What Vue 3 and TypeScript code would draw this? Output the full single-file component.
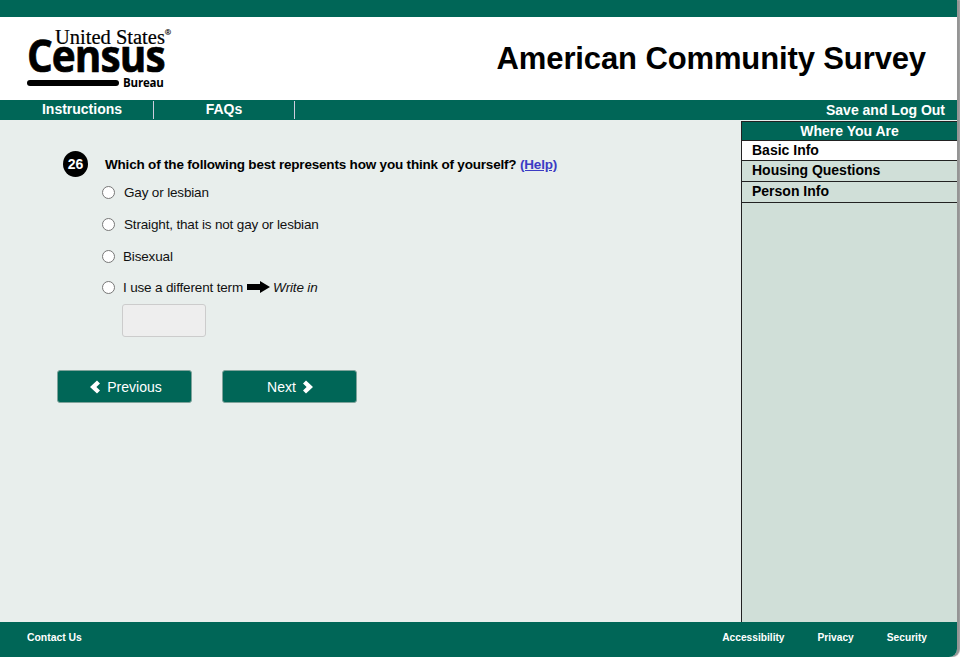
<script setup lang="ts">
const options = [
  { label: 'Gay or lesbian', cls: 'o1' },
  { label: 'Straight, that is not gay or lesbian', cls: 'o2' },
  { label: 'Bisexual', cls: 'o3' },
]
const steps = [
  { label: 'Basic Info', active: true },
  { label: 'Housing Questions', active: false },
  { label: 'Person Info', active: false },
]
</script>

<template>
  <div class="page">
    <div class="topbar"></div>
    <header class="masthead">
      <div class="logo">
        <div class="logo-us">United States<sup>®</sup></div>
        <div class="logo-census">Census</div>
        <div class="logo-foot">
          <span class="logo-bar"></span>
          <span class="logo-bureau">Bureau</span>
        </div>
      </div>
      <h1>American Community Survey</h1>
    </header>
    <nav class="nav">
      <a class="tab tab1">Instructions</a>
      <a class="tab tab2">FAQs</a>
      <a class="save">Save and Log Out</a>
    </nav>
    <div class="body">
      <main class="main">
        <div class="question">
          <span class="num">26</span>
          <span class="qtext">Which of the following best represents how you think of yourself? <a class="help">(Help)</a></span>
        </div>
        <label v-for="o in options" :key="o.label" class="opt" :class="o.cls">
          <span class="radio"></span>{{ o.label }}
        </label>
        <label class="opt o4">
          <span class="radio"></span>I use a different term
          <svg class="arrow" width="23" height="12" viewBox="0 0 23 12"><path d="M0 3h13V0l10 6-10 6V9H0z" fill="#000" /></svg>
          <em>Write in</em>
        </label>
        <div class="writein"></div>
        <div class="buttons">
          <button class="btn">
            <svg width="12" height="14" viewBox="0 0 12 14"><path d="M8 0.5l3 3-3.6 3.5 3.6 3.5-3 3L1 7z" fill="#fff" /></svg>
            Previous
          </button>
          <button class="btn">
            Next
            <svg width="12" height="14" viewBox="0 0 12 14"><path d="M4 0.5l-3 3 3.6 3.5-3.6 3.5 3 3L11 7z" fill="#fff" /></svg>
          </button>
        </div>
      </main>
      <aside class="side">
        <div class="side-title">Where You Are</div>
        <div v-for="s in steps" :key="s.label" class="step" :class="{ active: s.active }">{{ s.label }}</div>
      </aside>
    </div>
    <footer class="footer">
      <a class="contact">Contact Us</a>
      <div class="foot-right">
        <a>Accessibility</a>
        <a>Privacy</a>
        <a>Security</a>
      </div>
    </footer>
  </div>
</template>

<style>
html, body { margin: 0; background: #fff; }
</style>

<style scoped>
.page {
  width: 957px;
  height: 657px;
  display: flex;
  flex-direction: column;
  font-family: "Liberation Sans", Arial, sans-serif;
  color: #000;
  overflow: hidden;
  border-bottom-right-radius: 8px;
  box-shadow: 3px 0 1px #959595;
}
.topbar { height: 17px; background: #006657; flex: none; }
.masthead {
  height: 83px;
  flex: none;
  background: #fff;
  display: flex;
  justify-content: space-between;
  padding: 0 31px 0 27px;
  box-sizing: border-box;
}
.logo { width: 146px; padding-top: 10px; }
.logo-us {
  font-family: "Liberation Serif", serif;
  font-size: 20.5px;
  line-height: 20px;
  margin-left: 28px;
  white-space: nowrap;
  -webkit-text-stroke: 0.2px #000;
}
.logo-us sup { font-size: 8px; color: #555; font-family: "Liberation Sans", sans-serif; vertical-align: 9px; line-height: 0; }
.logo-census {
  font-family: "Open Sans", sans-serif;
  font-weight: 700;
  font-size: 44px;
  line-height: 36px;
  margin-top: -10px;
  letter-spacing: -1px;
  white-space: nowrap;
  transform: scaleX(0.92);
  transform-origin: left;
  -webkit-text-stroke: 0.7px #000;
}
.logo-foot { display: flex; align-items: center; gap: 4px; margin-top: 3px; height: 13px; }
.logo-bar { width: 92px; height: 6px; background: #000; border-radius: 3px; flex: none; }
.logo-bureau { font-family: "Open Sans", sans-serif; font-weight: 700; font-size: 11.5px; letter-spacing: -0.2px; }
h1 {
  margin: 0;
  align-self: center;
  font-size: 31px;
  font-weight: 700;
  line-height: 36px;
  letter-spacing: -0.12px;
  white-space: nowrap;
}
.nav {
  height: 20px;
  flex: none;
  background: #006657;
  display: flex;
  align-items: center;
  color: #fff;
  font-size: 14px;
  font-weight: 700;
  box-sizing: border-box;
}
.tab {
  height: 18px;
  line-height: 17px;
  border-right: 1px solid #ccd;
  text-align: center;
}
.tab1 { width: 154px; padding-left: 11px; box-sizing: border-box; }
.tab2 { width: 140px; }
.save { margin-left: auto; padding-right: 12px; line-height: 20px; }
.body { flex: 1; display: flex; min-height: 0; background: #e8eeec; }
.main { flex: 1; padding: 31px 0 0 62px; min-width: 0; }
.question { display: flex; align-items: center; height: 26px; }
.num {
  width: 25px;
  height: 26px;
  margin-left: 1px;
  border-radius: 50%;
  background: #000;
  color: #fff;
  font-weight: 700;
  font-size: 14px;
  line-height: 26px;
  text-align: center;
  flex: none;
}
.qtext { margin-left: 17px; font-size: 13.5px; letter-spacing: -0.19px; font-weight: 700; white-space: nowrap; }
.help { color: #3b3bc4; text-decoration: underline; }
.opt {
  display: flex;
  align-items: center;
  margin-left: 40px;
  font-size: 13.5px;
  letter-spacing: -0.16px;
  color: #111;
  white-space: nowrap;
  height: 18px;
}
.radio {
  width: 11px;
  height: 11px;
  border: 1px solid #777;
  border-radius: 50%;
  background: #fff;
  margin-right: 9px;
  flex: none;
}
.o1 { margin-top: 6px; }
.o2 { margin-top: 14px; }
.o3 { margin-top: 14px; }
.o4 { margin-top: 13px; }
.o3 .radio, .o4 .radio { margin-right: 8px; }
.arrow { margin: 0 3px 0 4px; }
.writein {
  width: 82px;
  height: 31px;
  margin: 8px 0 0 60px;
  background: #eee;
  border: 1px solid #ccc;
  border-radius: 3px;
}
.buttons { display: flex; gap: 30px; margin: 33px 0 0 -5px; }
.btn {
  width: 135px;
  height: 33px;
  background: #006657;
  color: #fff;
  border: 1px solid #7fa39b;
  border-radius: 3px;
  font-family: inherit;
  font-size: 14px;
  display: flex;
  align-items: center;
  justify-content: center;
  gap: 6px;
  padding: 0 0 0 2px;
  box-sizing: border-box;
}
.side {
  width: 215px;
  flex: none;
  margin-top: 1px;
  background: #d0dfd8;
  border-left: 1px solid #222;
  box-sizing: content-box;
}
.side-title {
  height: 18px;
  line-height: 19px;
  background: #006657;
  color: #fff;
  text-align: center;
  font-size: 14px;
  font-weight: 700;
  border-top: 1px solid #222;
}
.step {
  height: 19px;
  line-height: 18px;
  padding-left: 10px;
  font-size: 14px;
  font-weight: 700;
  border-top: 1px solid #222;
}
.step + .step { height: 20px; }
.step:last-child { border-bottom: 1px solid #222; }
.step.active { background: #fff; }
.footer {
  height: 35px;
  flex: none;
  background: #006657;
  color: #fff;
  font-size: 10.2px;
  font-weight: 700;
  display: flex;
  align-items: center;
  justify-content: space-between;
  padding: 0 30px 5px 27px;
  box-sizing: border-box;
}
.contact { font-size: 10.4px; }
.foot-right { display: flex; gap: 33px; }
</style>
